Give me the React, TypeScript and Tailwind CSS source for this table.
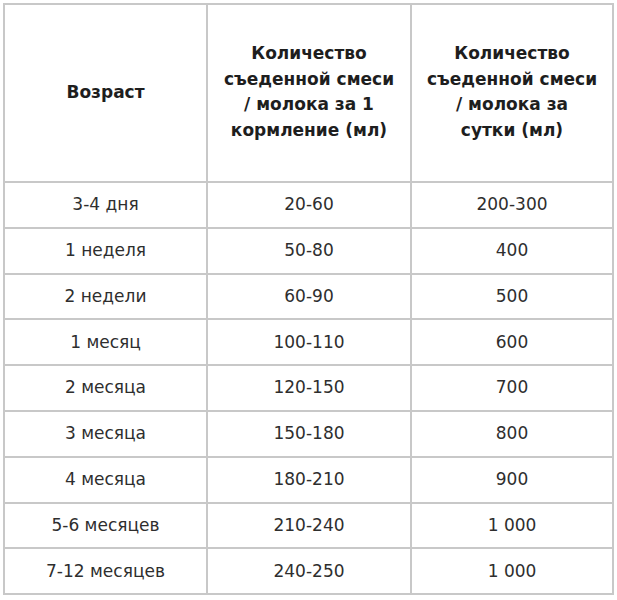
const ROWS: [string, string, string][] = [
  ["3-4 дня", "20-60", "200-300"],
  ["1 неделя", "50-80", "400"],
  ["2 недели", "60-90", "500"],
  ["1 месяц", "100-110", "600"],
  ["2 месяца", "120-150", "700"],
  ["3 месяца", "150-180", "800"],
  ["4 месяца", "180-210", "900"],
  ["5-6 месяцев", "210-240", "1 000"],
  ["7-12 месяцев", "240-250", "1 000"],
];

export default function App() {
  return (
    <div
      className="w-[617px] h-[600px] bg-white pt-[3px] pl-[3px]"
      style={{ fontFamily: '"DejaVu Sans", Verdana, sans-serif' }}
    >
      <table className="border-collapse table-fixed w-[609px] text-[17px]">
        <colgroup>
          <col className="w-[203px]" />
          <col className="w-[204px]" />
          <col className="w-[202px]" />
        </colgroup>
        <thead>
          <tr className="h-[178px]">
            <th className="border-2 border-[#c8c8c8] font-bold text-[#1e1e1e] leading-[25.5px] px-1">
              Возраст
            </th>
            <th className="border-2 border-[#c8c8c8] font-bold text-[#1e1e1e] leading-[25.5px] px-1 pb-[2px]">
              Количество
              <br />
              съеденной смеси
              <br />
              / молока за 1
              <br />
              кормление (мл)
            </th>
            <th className="border-2 border-[#c8c8c8] font-bold text-[#1e1e1e] leading-[25.5px] px-1 pb-[2px]">
              Количество
              <br />
              съеденной смеси
              <br />
              / молока за
              <br />
              сутки (мл)
            </th>
          </tr>
        </thead>
        <tbody>
          {ROWS.map((r, i) => (
            <tr key={i} className="h-[45.8px]">
              {r.map((c, j) => (
                <td
                  key={j}
                  className="border-2 border-[#c8c8c8] text-center text-[#2e2e2e] p-0"
                >
                  {c}
                </td>
              ))}
            </tr>
          ))}
        </tbody>
      </table>
    </div>
  );
}
